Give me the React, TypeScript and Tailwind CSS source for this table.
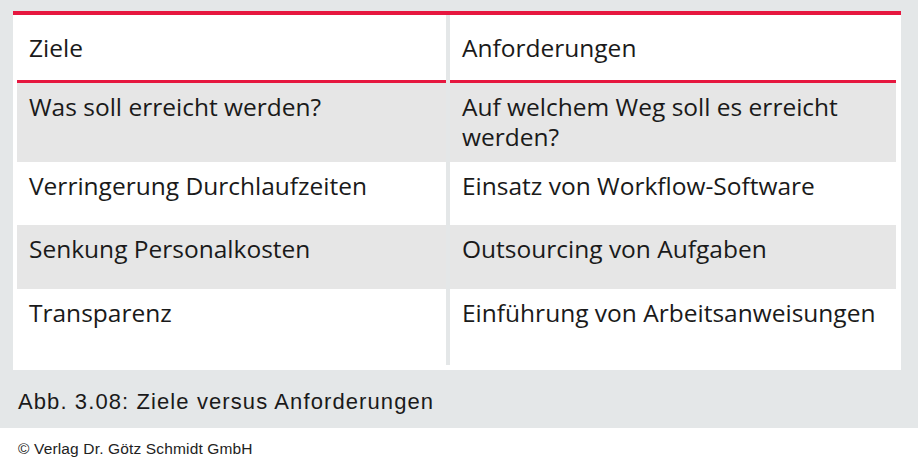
import React from 'react';

const rows = [
  { ziel: 'Was soll erreicht werden?', anf: 'Auf welchem Weg soll es erreicht werden?', gray: true, h: 'h-[79px]' },
  { ziel: 'Verringerung Durchlaufzeiten', anf: 'Einsatz von Workflow-Software', gray: false, h: 'h-[63px]' },
  { ziel: 'Senkung Personalkosten', anf: 'Outsourcing von Aufgaben', gray: true, h: 'h-[64px]' },
  { ziel: 'Transparenz', anf: 'Einführung von Arbeitsanweisungen', gray: false, h: 'h-[76px]' },
];

const App = () => {
  return (
    <div className="w-[918px] h-[458px] bg-white overflow-hidden">
      <div className="bg-[#e4e7e8] h-[428px] pt-[11px] pl-[13px]">
        {/* Table panel */}
        <div
          className="w-[888px] h-[359px] bg-white border-t-4 border-[#e6173f] pl-[4px] pr-[5px] text-[#1a1a1a] text-[24.5px] leading-[30px]"
          style={{ fontFamily: '"Open Sans", "Noto Sans", sans-serif' }}
        >
          <div className="grid grid-cols-[429px_4px_1fr]">
            {/* Header */}
            <div className="h-[68px] border-b-[3px] border-[#e6173f] pl-[12px] flex items-center">Ziele</div>
            <div className="h-[68px] bg-[#e4e7e8]" />
            <div className="h-[68px] border-b-[3px] border-[#e6173f] pl-[12px] flex items-center">Anforderungen</div>

            {rows.map((r) => (
              <React.Fragment key={r.ziel}>
                <div className={`${r.h} ${r.gray ? 'bg-[#e6e6e6]' : 'bg-white'} pl-[12px] pt-[9px] pr-[8px]`}>{r.ziel}</div>
                <div className={`${r.h} bg-[#e4e7e8]`} />
                <div className={`${r.h} ${r.gray ? 'bg-[#e6e6e6]' : 'bg-white'} pl-[12px] pt-[9px] pr-[6px]`}>{r.anf}</div>
              </React.Fragment>
            ))}
          </div>
        </div>

        {/* Caption */}
        <div
          className="pl-[5px] pt-[19px] text-[22px] leading-[26px] text-[#1a1a1a] tracking-[1.1px]"
          style={{ fontFamily: '"Liberation Sans", Arial, sans-serif' }}
        >
          Abb. 3.08: Ziele versus Anforderungen
        </div>
      </div>

      {/* Copyright */}
      <div
        className="pl-[18px] pt-[12px] text-[15.5px] leading-[18px] text-[#222] tracking-[0.15px]"
        style={{ fontFamily: '"Liberation Sans", Arial, sans-serif' }}
      >
        © Verlag Dr. Götz Schmidt GmbH
      </div>
    </div>
  );
};

export default App;
